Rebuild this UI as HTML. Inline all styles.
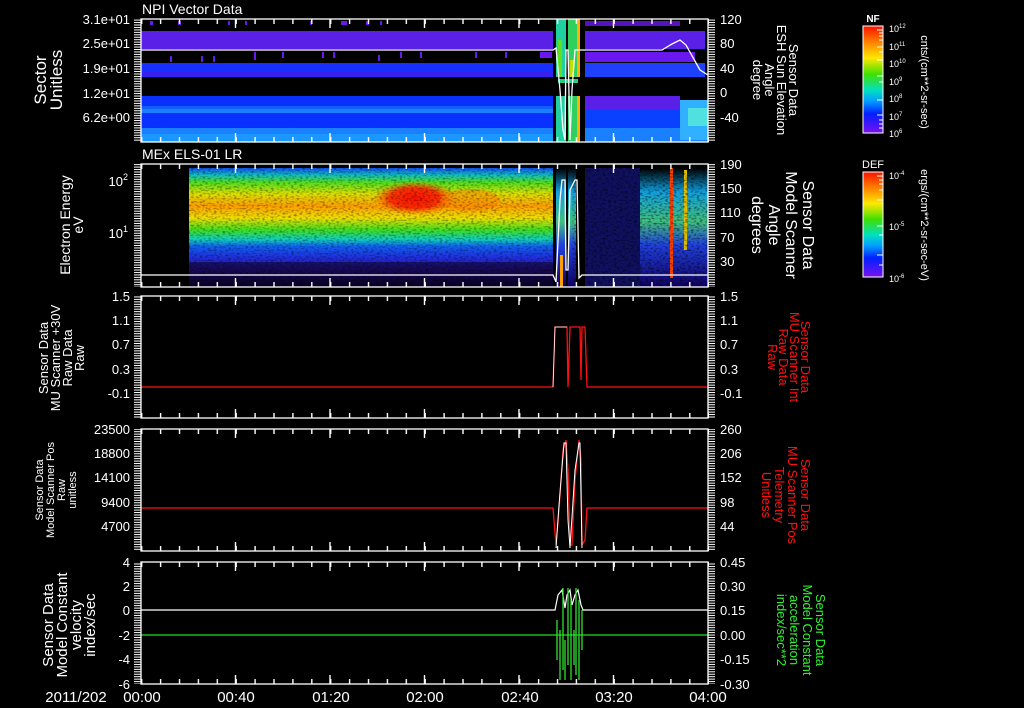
<!DOCTYPE html>
<html><head><meta charset="utf-8"><style>
html,body{margin:0;padding:0;background:#000;}
svg{display:block;}
text{font-family:"Liberation Sans",sans-serif;fill:#fff;}
</style></head><body>
<svg width="1024" height="708" viewBox="0 0 1024 708" xmlns="http://www.w3.org/2000/svg">
<defs>
<pattern id="xmin" x="141" y="0" width="18.9" height="708" patternUnits="userSpaceOnUse"><rect x="0" y="0" width="1.4" height="708" fill="#fff"/></pattern>
<pattern id="ymin" x="0" y="0" width="10" height="2.45" patternUnits="userSpaceOnUse"><rect x="0" y="0" width="10" height="1" fill="#fff"/></pattern>
<linearGradient id="cbar" x1="0" y1="0" x2="0" y2="1">
<stop offset="0" stop-color="#ff1000"/><stop offset="0.15" stop-color="#ff8000"/><stop offset="0.3" stop-color="#ffe800"/><stop offset="0.45" stop-color="#40e000"/><stop offset="0.6" stop-color="#00e0c0"/><stop offset="0.7" stop-color="#00a0ff"/><stop offset="0.82" stop-color="#0020ff"/><stop offset="1" stop-color="#7a10f0"/>
</linearGradient>
<linearGradient id="spec" x1="0" y1="0" x2="0" y2="1">
<stop offset="0" stop-color="#1050f0"/><stop offset="0.06" stop-color="#10c0c0"/><stop offset="0.12" stop-color="#50e020"/><stop offset="0.22" stop-color="#e0e000"/><stop offset="0.32" stop-color="#ffa000"/><stop offset="0.42" stop-color="#f0e000"/><stop offset="0.52" stop-color="#40e020"/><stop offset="0.6" stop-color="#10d0c0"/><stop offset="0.66" stop-color="#1060f0"/><stop offset="0.75" stop-color="#2030e0"/><stop offset="0.85" stop-color="#3010a0"/><stop offset="1" stop-color="#100040"/>
</linearGradient>
<linearGradient id="spec2" x1="0" y1="0" x2="0" y2="1">
<stop offset="0" stop-color="#000"/><stop offset="0.2" stop-color="#10a0e0"/><stop offset="0.45" stop-color="#40c080"/><stop offset="0.65" stop-color="#2040e0"/><stop offset="1" stop-color="#100060"/>
</linearGradient>
<radialGradient id="red" cx="0.5" cy="0.5" r="0.5"><stop offset="0" stop-color="#ff1000"/><stop offset="0.6" stop-color="#ff2000" stop-opacity="0.9"/><stop offset="1" stop-color="#ff6000" stop-opacity="0"/></radialGradient>
<filter id="noise"><feTurbulence type="fractalNoise" baseFrequency="0.35 0.6" numOctaves="1" seed="3"/><feColorMatrix values="0 0 0 0 0  0 0 0 0 0  0 0 0 0 0  0 0 0 -2.2 1.2"/></filter>
</defs>

<rect x="141" y="31" width="412" height="18" fill="#5a20e8"/>
<rect x="141" y="63" width="412" height="14" fill="#1830ff"/>
<rect x="141" y="72" width="412" height="5" fill="#3a20f0"/>
<rect x="141" y="96" width="412" height="46" fill="#0a30ff"/>
<rect x="141" y="106" width="412" height="3" fill="#1060ff"/>
<rect x="141" y="109" width="412" height="4" fill="#1a80ff"/>
<rect x="141" y="128" width="412" height="6" fill="#1a80ff"/>
<rect x="141" y="134" width="412" height="8" fill="#1a98ff"/>
<g fill="#6a18f0">
<rect x="150" y="21" width="3" height="4"/><rect x="178" y="21" width="3" height="4"/><rect x="228" y="21" width="2" height="4"/><rect x="245" y="21" width="2" height="4"/><rect x="310" y="21" width="2" height="4"/><rect x="341" y="21" width="6" height="4"/><rect x="366" y="21" width="3" height="4"/><rect x="380" y="21" width="2" height="4"/>
<rect x="170" y="56" width="2" height="6"/><rect x="201" y="56" width="2" height="6"/><rect x="213" y="56" width="2" height="6"/><rect x="254" y="52" width="2" height="8"/><rect x="282" y="52" width="2" height="6"/><rect x="322" y="52" width="2" height="6"/><rect x="333" y="52" width="2" height="6"/><rect x="378" y="55" width="2" height="6"/><rect x="400" y="52" width="2" height="6"/><rect x="420" y="52" width="2" height="6"/><rect x="475" y="52" width="2" height="6"/><rect x="505" y="52" width="2" height="6"/><rect x="540" y="52" width="12" height="6"/>
</g>
<rect x="556" y="19" width="10" height="123" fill="#20d0a0"/>
<rect x="558" y="40" width="4" height="40" fill="#60e020"/>
<rect x="568" y="19" width="9" height="123" fill="#30d060"/>
<rect x="570" y="60" width="4" height="30" fill="#c0e000"/>
<rect x="577" y="19" width="3" height="123" fill="#ffb000"/>
<rect x="556" y="77" width="24" height="19" fill="#000"/>
<rect x="558" y="79" width="20" height="4" fill="#20d080"/>
<rect x="585" y="21" width="95" height="5" fill="#6a18f0" opacity="0.8"/>
<rect x="585" y="31" width="120" height="18" fill="#5a20e8"/>
<rect x="585" y="52" width="110" height="10" fill="#6a18f0"/>
<rect x="585" y="63" width="120" height="14" fill="#2040ff"/>
<rect x="585" y="96" width="95" height="13" fill="#5a20e8"/>
<rect x="585" y="109" width="123" height="33" fill="#0a40ff"/>
<rect x="585" y="128" width="123" height="14" fill="#1a80ff"/>
<rect x="680" y="100" width="28" height="40" fill="#30b0ff"/>
<rect x="688" y="108" width="20" height="18" fill="#50e0e0"/>
<polyline points="141,50 553,50 556,48 560,90 563,130 565,140 566,50 568,50 570,140 572,90 575,50 585,50 662,50 672,44 680,40 686,45 700,70 708,75" fill="none" stroke="#fff" stroke-width="1.3"/>

<rect x="189" y="168" width="364" height="119" fill="url(#spec)"/>
<ellipse cx="415" cy="198" rx="42" ry="17" fill="url(#red)"/>
<ellipse cx="470" cy="200" rx="30" ry="11" fill="#ff8000" opacity="0.5"/>
<rect x="189" y="168" width="364" height="119" fill="#000" filter="url(#noise)" opacity="0.55"/>
<rect x="189" y="262" width="364" height="25" fill="#000" opacity="0.45"/>
<rect x="556" y="168" width="10" height="119" fill="url(#spec2)"/>
<rect x="568" y="168" width="8" height="119" fill="url(#spec2)"/>
<rect x="560" y="255" width="3" height="32" fill="#ffa000"/>
<rect x="585" y="168" width="55" height="119" fill="#2020c0" opacity="0.5"/>
<rect x="640" y="168" width="68" height="119" fill="url(#spec2)"/>
<rect x="670" y="168" width="3" height="110" fill="#ff4000"/>
<rect x="684" y="170" width="3" height="80" fill="#e0c000"/>
<rect x="585" y="168" width="123" height="119" fill="#000" filter="url(#noise)" opacity="0.75"/>
<polyline points="141,275 553,275 556,282 560,200 562,180 565,180 566,270 568,270 570,190 575,180 577,180 579,278 582,275 708,275" fill="none" stroke="#fff" stroke-width="1.3"/>

<polyline points="141,387 553,387 555,327 567,327 568,387 570,327 580,327 581,380 582,327 585,327 587,387 708,387" fill="none" stroke="#ff1010" stroke-width="1.3"/>
<polyline points="553,387 555,327 567,327" fill="none" stroke="#fff" stroke-width="0.8"/>
<polyline points="141,508 553,508 556,545 559,510 563,450 566,440 568,470 570,545 572,545 575,480 579,440 581,460 582,545 585,540 587,508 708,508" fill="none" stroke="#ff1010" stroke-width="1.3"/>
<polyline points="556,548 559,505 564,443 566,443 568,520 570,548 575,470 579,443 580,443 582,548" fill="none" stroke="#fff" stroke-width="1"/>
<line x1="141" y1="635" x2="708" y2="635" stroke="#20e020" stroke-width="1.3"/>
<polyline points="141,610 555,610 558,595 562,590 565,608 567,595 570,590 572,605 575,595 578,590 581,605 583,610 708,610" fill="none" stroke="#fff" stroke-width="1.2"/>
<g stroke="#30e030" stroke-width="1.3">
<line x1="557" y1="620" x2="557" y2="660"/><line x1="560" y1="630" x2="560" y2="680"/><line x1="563" y1="588" x2="563" y2="670"/><line x1="565" y1="640" x2="565" y2="680"/><line x1="568" y1="588" x2="568" y2="665"/><line x1="571" y1="600" x2="571" y2="680"/><line x1="574" y1="630" x2="574" y2="665"/><line x1="576" y1="588" x2="576" y2="675"/><line x1="579" y1="600" x2="579" y2="680"/><line x1="582" y1="610" x2="582" y2="650"/>
</g>

<g fill="none" stroke="#fff" stroke-width="1.3">
<rect x="141" y="19" width="567" height="123"/>
<rect x="141" y="164" width="567" height="123"/>
<rect x="141" y="296" width="567" height="122"/>
<rect x="141" y="429" width="567" height="122"/>
<rect x="141" y="562" width="567" height="122"/>
</g>
<g fill="url(#xmin)">
<rect x="141" y="19" width="568" height="5"/><rect x="141" y="137" width="568" height="5"/>
<rect x="141" y="164" width="568" height="5"/><rect x="141" y="282" width="568" height="5"/>
<rect x="141" y="296" width="568" height="5"/><rect x="141" y="413" width="568" height="5"/>
<rect x="141" y="429" width="568" height="5"/><rect x="141" y="546" width="568" height="5"/>
<rect x="141" y="562" width="568" height="5"/><rect x="141" y="679" width="568" height="5"/>
</g>
<g stroke="#fff" stroke-width="1.4">
<path d="M235.5 19v9M330 19v9M424.5 19v9M519 19v9M613.5 19v9M235.5 142v-9M330 142v-9M424.5 142v-9M519 142v-9M613.5 142v-9"/>
<path d="M235.5 164v9M330 164v9M424.5 164v9M519 164v9M613.5 164v9M235.5 287v-9M330 287v-9M424.5 287v-9M519 287v-9M613.5 287v-9"/>
<path d="M235.5 296v9M330 296v9M424.5 296v9M519 296v9M613.5 296v9M235.5 418v-9M330 418v-9M424.5 418v-9M519 418v-9M613.5 418v-9"/>
<path d="M235.5 429v9M330 429v9M424.5 429v9M519 429v9M613.5 429v9M235.5 551v-9M330 551v-9M424.5 551v-9M519 551v-9M613.5 551v-9"/>
<path d="M235.5 562v9M330 562v9M424.5 562v9M519 562v9M613.5 562v9M235.5 684v-9M330 684v-9M424.5 684v-9M519 684v-9M613.5 684v-9"/>
</g>
<g fill="url(#ymin)">
<rect x="134" y="19" width="7" height="123"/><rect x="708" y="19" width="7" height="123"/>
<rect x="134" y="164" width="7" height="123"/><rect x="708" y="164" width="7" height="123"/>
<rect x="134" y="296" width="7" height="122"/><rect x="708" y="296" width="7" height="122"/>
<rect x="134" y="429" width="7" height="122"/><rect x="708" y="429" width="7" height="122"/>
<rect x="134" y="562" width="7" height="122"/><rect x="708" y="562" width="7" height="122"/>
</g>

<text x="142" y="14" font-size="14">NPI Vector Data</text>
<text x="142" y="159" font-size="14">MEx ELS-01 LR</text>

<g font-size="13" text-anchor="end">
<text x="130" y="24">3.1e+01</text><text x="130" y="48">2.5e+01</text><text x="130" y="73">1.9e+01</text><text x="130" y="98">1.2e+01</text><text x="130" y="122">6.2e+00</text>
<text x="128" y="186">10<tspan font-size="9" dy="-6">2</tspan></text><text x="128" y="238">10<tspan font-size="9" dy="-6">1</tspan></text>
<text x="130" y="301">1.5</text><text x="130" y="325">1.1</text><text x="130" y="349">0.7</text><text x="130" y="374">0.3</text><text x="130" y="398">-0.1</text>
<text x="130" y="434">23500</text><text x="130" y="458">18800</text><text x="130" y="482">14100</text><text x="130" y="507">9400</text><text x="130" y="531">4700</text>
<text x="130" y="567">4</text><text x="130" y="591">2</text><text x="130" y="615">0</text><text x="130" y="640">-2</text><text x="130" y="664">-4</text><text x="130" y="689">-6</text>
</g>
<g font-size="13">
<text x="720" y="24">120</text><text x="720" y="48">80</text><text x="720" y="73">40</text><text x="720" y="97">0</text><text x="720" y="122">-40</text>
<text x="720" y="169">190</text><text x="720" y="193">150</text><text x="720" y="217">110</text><text x="720" y="242">70</text><text x="720" y="266">30</text>
<text x="720" y="301">1.5</text><text x="720" y="325">1.1</text><text x="720" y="349">0.7</text><text x="720" y="374">0.3</text><text x="720" y="398">-0.1</text>
<text x="720" y="434">260</text><text x="720" y="458">206</text><text x="720" y="482">152</text><text x="720" y="507">98</text><text x="720" y="531">44</text>
<text x="720" y="567">0.45</text><text x="720" y="591">0.30</text><text x="720" y="615">0.15</text><text x="720" y="640">0.00</text><text x="720" y="664">-0.15</text><text x="720" y="689">-0.30</text>
</g>
<g font-size="15" text-anchor="middle">
<text x="76" y="702">2011/202</text><text x="142" y="702">00:00</text><text x="236" y="702">00:40</text><text x="331" y="702">01:20</text><text x="425" y="702">02:00</text><text x="520" y="702">02:40</text><text x="614" y="702">03:20</text><text x="708" y="702">04:00</text>
</g>

<g text-anchor="middle">
<text transform="translate(46,80) rotate(-90)" font-size="17">Sector</text>
<text transform="translate(62,80) rotate(-90)" font-size="17">Unitless</text>
<text transform="translate(70,225) rotate(-90)" font-size="14">Electron Energy</text>
<text transform="translate(83,225) rotate(-90)" font-size="14">eV</text>
<text transform="translate(48,358) rotate(-90)" font-size="13">Sensor Data</text>
<text transform="translate(60,358) rotate(-90)" font-size="13">MU Scanner +30V</text>
<text transform="translate(72,358) rotate(-90)" font-size="13">Raw Data</text>
<text transform="translate(84,358) rotate(-90)" font-size="13">Raw</text>
<text transform="translate(43,490) rotate(-90)" font-size="11">Sensor Data</text>
<text transform="translate(54,490) rotate(-90)" font-size="11">Model Scanner Pos</text>
<text transform="translate(65,490) rotate(-90)" font-size="11">Raw</text>
<text transform="translate(76,490) rotate(-90)" font-size="11">unitless</text>
<text transform="translate(53,625) rotate(-90)" font-size="15">Sensor Data</text>
<text transform="translate(67,625) rotate(-90)" font-size="15">Model Constant</text>
<text transform="translate(81,625) rotate(-90)" font-size="15">velocity</text>
<text transform="translate(95,625) rotate(-90)" font-size="15">index/sec</text>
</g>
<g text-anchor="middle">
<text transform="translate(789,80) rotate(90)" font-size="13">Sensor Data</text>
<text transform="translate(777,80) rotate(90)" font-size="13">ESH Sun Elevation</text>
<text transform="translate(765,80) rotate(90)" font-size="13">Angle</text>
<text transform="translate(753,80) rotate(90)" font-size="13">degree</text>
<text transform="translate(803,225) rotate(90)" font-size="16">Sensor Data</text>
<text transform="translate(786,225) rotate(90)" font-size="16">Model Scanner</text>
<text transform="translate(769,225) rotate(90)" font-size="16">Angle</text>
<text transform="translate(752,225) rotate(90)" font-size="16">degrees</text>
<text transform="translate(801,357) rotate(90)" font-size="13" style="fill:#ff1010">Sensor Data</text>
<text transform="translate(790,357) rotate(90)" font-size="13" style="fill:#ff1010">MU Scanner Int</text>
<text transform="translate(779,357) rotate(90)" font-size="13" style="fill:#ff1010">Raw Data</text>
<text transform="translate(768,357) rotate(90)" font-size="13" style="fill:#ff1010">Raw</text>
<text transform="translate(801,495) rotate(90)" font-size="13" style="fill:#ff1010">Sensor Data</text>
<text transform="translate(788,495) rotate(90)" font-size="13" style="fill:#ff1010">MU Scanner Pos</text>
<text transform="translate(775,495) rotate(90)" font-size="13" style="fill:#ff1010">Telemetry</text>
<text transform="translate(762,495) rotate(90)" font-size="13" style="fill:#ff1010">Unitless</text>
<text transform="translate(816,630) rotate(90)" font-size="13" style="fill:#30f030">Sensor Data</text>
<text transform="translate(803,630) rotate(90)" font-size="13" style="fill:#30f030">Model Constant</text>
<text transform="translate(790,630) rotate(90)" font-size="13" style="fill:#30f030">acceleration</text>
<text transform="translate(777,630) rotate(90)" font-size="13" style="fill:#30f030">index/sec**2</text>
</g>

<rect x="863" y="26" width="20" height="107" fill="url(#cbar)" stroke="#fff" stroke-width="1"/>
<rect x="863" y="172" width="20" height="105" fill="url(#cbar)" stroke="#fff" stroke-width="1"/>
<g stroke="#fff" stroke-width="1"><path d="M877 30h6M879 33h4M879 36h4M879 40h4M877 47h6M879 52h4M877 60h6M877 76h6M879 82h4M877 100h6M877 115h6M879 120h4M879 124h4M879 128h4"/>
<path d="M877 176h6M879 180h4M879 184h4M879 190h4M877 200h6M877 226h6M879 235h4M877 255h6M879 265h4"/></g>
<text x="873" y="22" font-size="10" font-weight="bold" text-anchor="middle">NF</text>
<text x="873" y="168" font-size="11" text-anchor="middle">DEF</text>
<g font-size="9">
<text x="889" y="32">10<tspan font-size="6" dy="-4">12</tspan></text>
<text x="889" y="50">10<tspan font-size="6" dy="-4">11</tspan></text>
<text x="889" y="67">10<tspan font-size="6" dy="-4">10</tspan></text>
<text x="889" y="85">10<tspan font-size="6" dy="-4">9</tspan></text>
<text x="889" y="102">10<tspan font-size="6" dy="-4">8</tspan></text>
<text x="889" y="120">10<tspan font-size="6" dy="-4">7</tspan></text>
<text x="889" y="137">10<tspan font-size="6" dy="-4">6</tspan></text>
<text x="889" y="179">10<tspan font-size="6" dy="-4">-4</tspan></text>
<text x="889" y="230">10<tspan font-size="6" dy="-4">-5</tspan></text>
<text x="889" y="282">10<tspan font-size="6" dy="-4">-6</tspan></text>
</g>
<text transform="translate(921,82) rotate(90)" font-size="11" text-anchor="middle">cnts/(cm**2-sr-sec)</text>
<text transform="translate(921,225) rotate(90)" font-size="11" text-anchor="middle">ergs/(cm**2-sr-sec-eV)</text>
</svg>
</body></html>
